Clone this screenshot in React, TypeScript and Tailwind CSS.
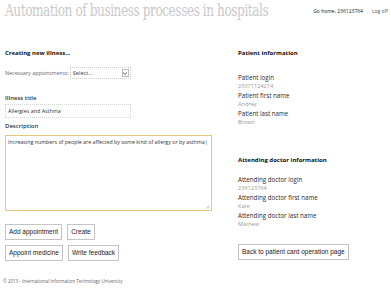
import React from "react";

const sans = "font-['Open_Sans','Liberation_Sans',sans-serif]";

function Field({ label, value }: { label: string; value: string }) {
  return (
    <div className="flex flex-col">
      <div className="h-[9px] leading-[9px] text-[6.2px] font-medium text-[#2a2a2a]">{label}</div>
      <div className="h-[9px] leading-[9px] text-[5.6px] text-[#999]">{value}</div>
    </div>
  );
}

function Btn({ children }: { children: React.ReactNode }) {
  return (
    <div className="h-[16px] px-[3px] flex items-center border border-[#c4c4c4] bg-white text-[6.5px] text-[#222] font-['Liberation_Sans',sans-serif] whitespace-nowrap">
      {children}
    </div>
  );
}

export default function App() {
  return (
    <div className={`w-[391px] h-[289px] bg-white overflow-hidden relative ${sans}`}>
      <div className="flex">
        {/* Left column */}
        <div className="w-[233px] pl-[5px] flex flex-col">
          <div className="h-[22px] pt-[1px] text-[16px] leading-[20px] text-[#c9c9c9] font-['DejaVu_Serif',serif] whitespace-nowrap tracking-[-0.6px] scale-x-[0.76] origin-left">
            Automation of business processes in hospitals
          </div>
          <div className="mt-[26px] h-[10px] leading-[10px] text-[6px] font-bold text-[#111]">Creating new illness...</div>
          <div className="mt-[9px] flex items-center h-[12px]">
            <span className="text-[5.4px] text-[#666] leading-[12px]">Necessary appointments:</span>
            <div className="ml-[1px] w-[61px] h-[12px] border border-dotted border-[#ccc] flex items-center justify-between pl-[2px] pr-[1px]">
              <span className="text-[5.6px] text-[#333]">Select...</span>
              <div className="w-[7px] h-[8px] border border-[#bbb] flex items-center justify-center">
                <svg width="4" height="3" viewBox="0 0 4 3"><path d="M0.3 0.3 L2 2.6 L3.7 0.3" stroke="#444" strokeWidth="0.8" fill="none" /></svg>
              </div>
            </div>
          </div>
          <div className="mt-[15px] h-[9px] leading-[9px] text-[6px] font-semibold text-[#333]">Illness title</div>
          <div className="mt-[1px] w-[126px] h-[14px] border border-dotted border-[#d4d4d4] flex items-center pl-[2px] text-[5.4px] text-[#333]">
            Allergies and Asthma
          </div>
          <div className="mt-[3px] h-[11px] leading-[11px] text-[6px] font-semibold text-[#333]">Description</div>
          <div className="mt-[3px] w-[207px] h-[76px] border border-[#e8c87c] relative pt-[3px] pl-[2px] text-[5.3px] text-[#333] whitespace-nowrap overflow-hidden">
            Increasing numbers of people are affected by some kind of allergy or by asthma|
            <svg className="absolute right-[1px] bottom-[1px]" width="5" height="5" viewBox="0 0 5 5">
              <path d="M4.5 1 L1 4.5 M4.5 3 L3 4.5" stroke="#aaa" strokeWidth="0.7" />
            </svg>
          </div>
          <div className="mt-[13px] flex gap-[5px]">
            <Btn>Add appointment</Btn>
            <Btn>Create</Btn>
          </div>
          <div className="mt-[5px] flex gap-[5px]">
            <Btn>Appoint medicine</Btn>
            <Btn>Write feedback</Btn>
          </div>
          <div className="mt-[17px] -ml-[2px] text-[4.5px] text-[#666] leading-[6px] whitespace-nowrap">
            © 2013 - International Information Technology University
          </div>
        </div>
        {/* Right column */}
        <div className="flex-1 flex flex-col">
          <div className="h-[22px] flex justify-end items-start pt-[8px] pr-[3px] gap-[9px] text-[5px] text-[#222] whitespace-nowrap">
            <span>Go home, 236123764</span>
            <span className="text-[#555]">Log off</span>
          </div>
          <div className="pl-[5px] flex flex-col">
            <div className="mt-[26px] h-[10px] leading-[10px] text-[6px] font-bold text-[#111]">Patient information</div>
            <div className="mt-[15px] flex flex-col">
              <Field label="Patient login" value="25071124214" />
              <Field label="Patient first name" value="Andrey" />
              <Field label="Patient last name" value="Brown" />
            </div>
            <div className="mt-[28px] h-[10px] leading-[10px] text-[6px] font-bold text-[#111]">Attending doctor information</div>
            <div className="mt-[10px] flex flex-col">
              <Field label="Attending doctor login" value="236123764" />
              <Field label="Attending doctor first name" value="Kate" />
              <Field label="Attending doctor last name" value="Mathew" />
            </div>
            <div className="mt-[15px] self-start">
              <Btn>Back to patient card operation page</Btn>
            </div>
          </div>
        </div>
      </div>
    </div>
  );
}
